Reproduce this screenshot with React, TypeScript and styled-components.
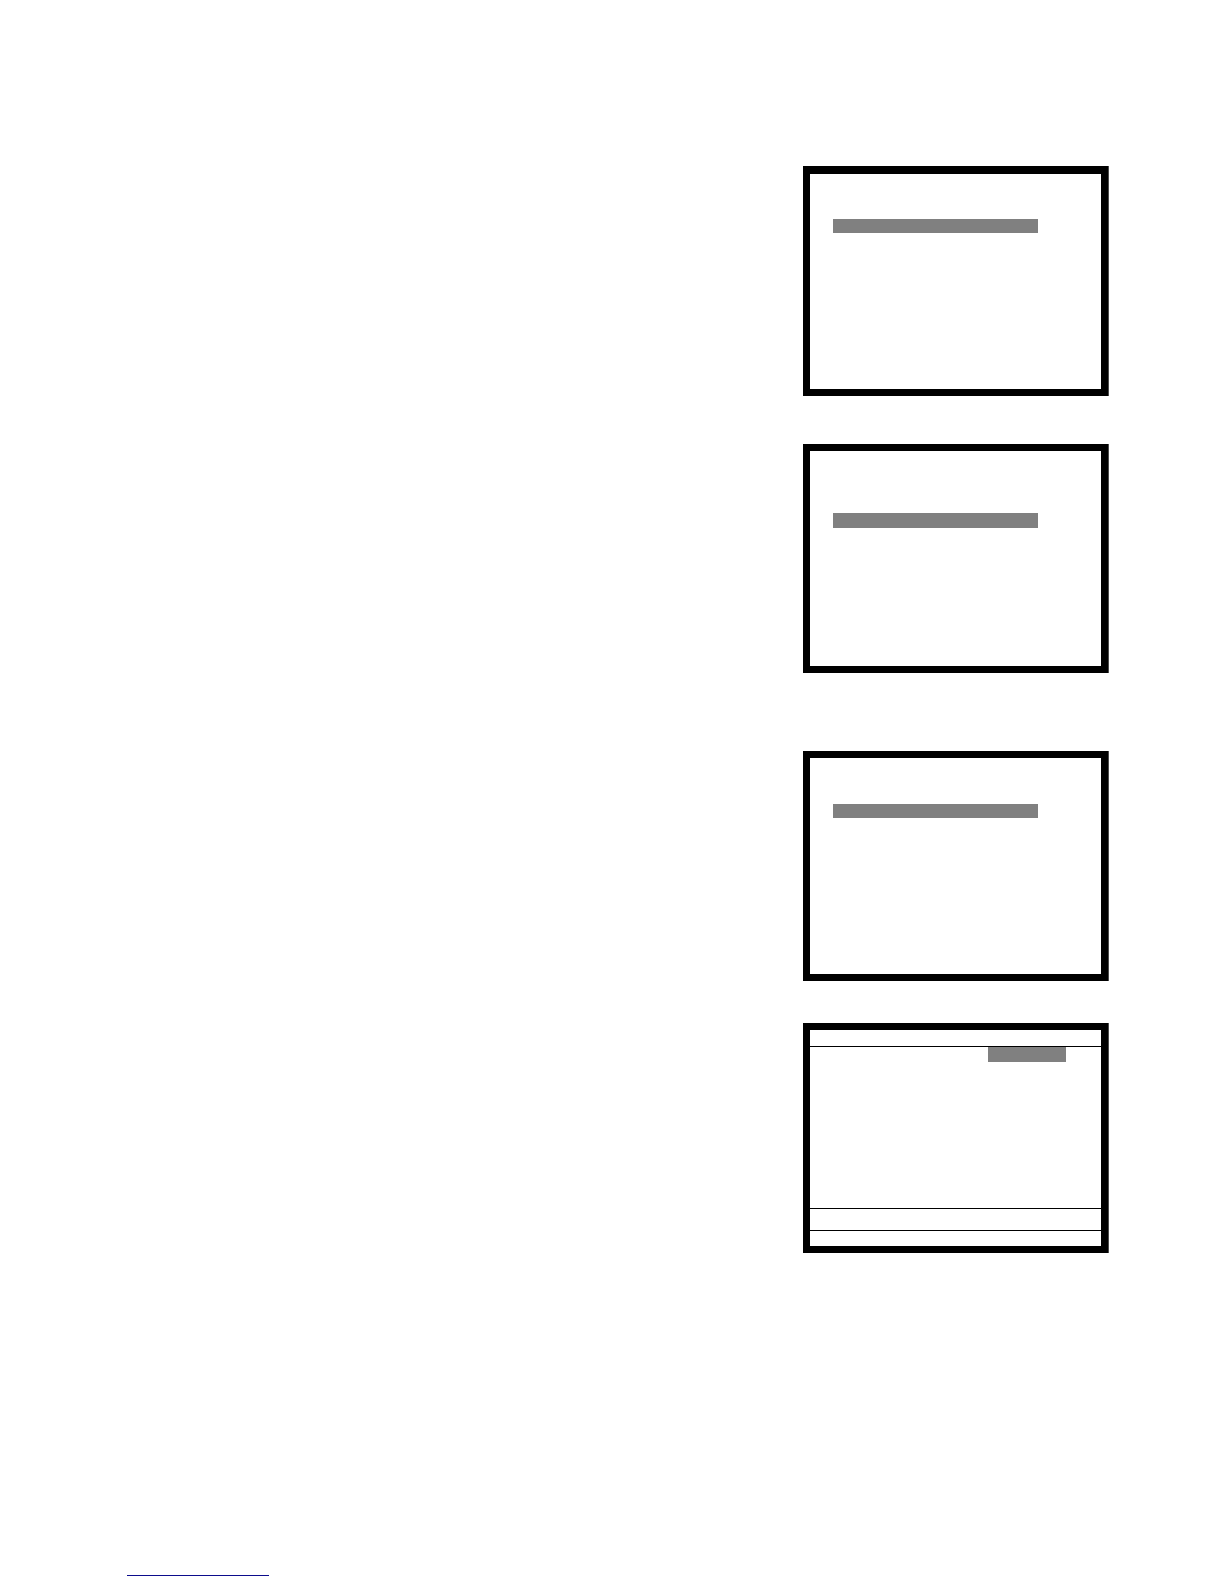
import styled, { createGlobalStyle } from "styled-components";

const GlobalStyle = createGlobalStyle`
  *, *::before, *::after { box-sizing: border-box; }
  body {
    margin: 0;
    background: #ffffff;
    font-family: "Liberation Sans", Arial, sans-serif;
  }
`;

const Page = styled.div`
  display: flex;
  flex-direction: column;
  padding: 166px 116px 8px 127px;
`;

const Screens = styled.main`
  display: flex;
  flex-direction: column;
  align-items: flex-end;
`;

const Screen = styled.section<{ $rim?: number; $after?: number }>`
  display: flex;
  flex-direction: column;
  width: 305px;
  max-width: 100%;
  margin-bottom: ${({ $after = 0 }) => $after}px;
  border: 7px solid #000000;
  border-top-width: ${({ $rim = 7 }) => $rim}px;
  box-shadow: 1px 0 0 #4c4c4c;
  background: #ffffff;
`;

const MenuBody = styled.div<{ $height: number; $lead: number }>`
  min-height: ${({ $height }) => $height}px;
  padding: ${({ $lead }) => $lead}px 63px 0 23px;
`;

const Selection = styled.div<{ $height?: number }>`
  height: ${({ $height = 14 }) => $height}px;
  background: #808080;
`;

const TitleRow = styled.header`
  height: 17px;
  border-bottom: 1px solid #000000;
`;

const ValueArea = styled.div`
  display: flex;
  justify-content: flex-end;
  min-height: 161px;
  padding-right: 35px;
`;

const ValueSelection = styled(Selection)`
  width: 78px;
`;

const StatusRow = styled.div<{ $height: number }>`
  height: ${({ $height }) => $height}px;
  border-top: 1px solid #000000;
`;

const Footer = styled.footer`
  display: flex;
  padding-top: 308px;
`;

const FooterLink = styled.a`
  display: block;
  width: 142px;
  height: 15px;
  border-bottom: 1px solid #0c0c8c;
`;

interface MenuScreenProps {
  rim?: number;
  after: number;
  height: number;
  lead: number;
  bar?: number;
}

function MenuScreen({ rim, after, height, lead, bar }: MenuScreenProps) {
  return (
    <Screen $rim={rim} $after={after}>
      <MenuBody $height={height} $lead={lead}>
        <Selection $height={bar} />
      </MenuBody>
    </Screen>
  );
}

export default function App() {
  return (
    <>
      <GlobalStyle />
      <Page>
        <Screens>
          <MenuScreen rim={8} after={48} height={215} lead={45} />
          <MenuScreen after={78} height={215} lead={62} bar={15} />
          <MenuScreen after={42} height={216} lead={46} />
          <Screen>
            <TitleRow />
            <ValueArea>
              <ValueSelection $height={15} />
            </ValueArea>
            <StatusRow $height={22} />
            <StatusRow $height={16} />
          </Screen>
        </Screens>
        <Footer>
          <FooterLink href="#" />
        </Footer>
      </Page>
    </>
  );
}
